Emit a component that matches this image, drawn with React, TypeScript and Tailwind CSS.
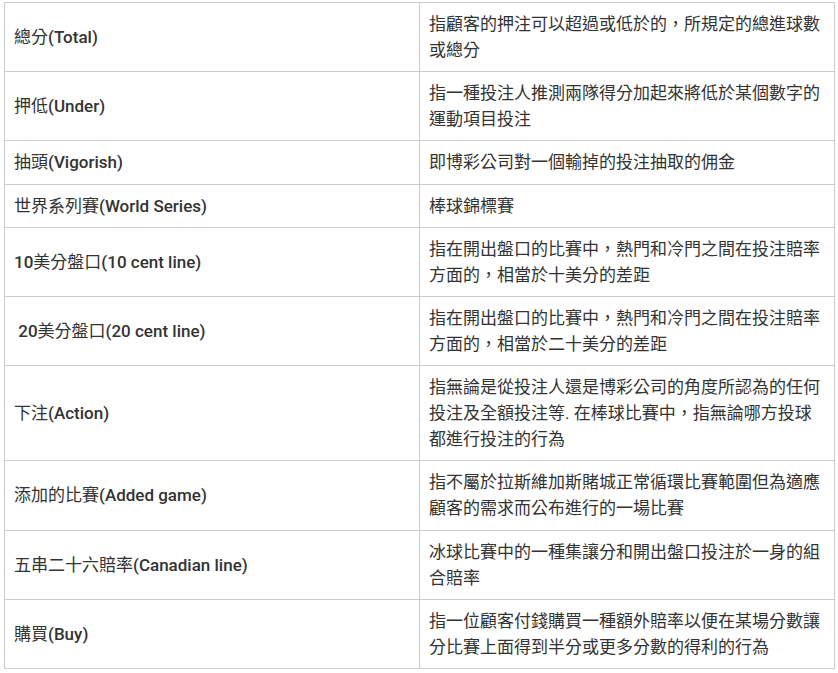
import React from "react";

type Term = { zh: string; en: string; desc: string; lead?: boolean };

const terms: Term[] = [
  { zh: "總分", en: "(Total)", desc: "指顧客的押注可以超過或低於的，所規定的總進球數或總分" },
  { zh: "押低", en: "(Under)", desc: "指一種投注人推測兩隊得分加起來將低於某個數字的運動項目投注" },
  { zh: "抽頭", en: "(Vigorish)", desc: "即博彩公司對一個輸掉的投注抽取的佣金" },
  { zh: "世界系列賽", en: "(World Series)", desc: "棒球錦標賽" },
  { zh: "10美分盤口", en: "(10 cent line)", desc: "指在開出盤口的比賽中，熱門和冷門之間在投注賠率方面的，相當於十美分的差距" },
  { zh: "20美分盤口", en: "(20 cent line)", desc: "指在開出盤口的比賽中，熱門和冷門之間在投注賠率方面的，相當於二十美分的差距", lead: true },
  { zh: "下注", en: "(Action)", desc: "指無論是從投注人還是博彩公司的角度所認為的任何投注及全額投注等. 在棒球比賽中，指無論哪方投球都進行投注的行為" },
  { zh: "添加的比賽", en: "(Added game)", desc: "指不屬於拉斯維加斯賭城正常循環比賽範圍但為適應顧客的需求而公布進行的一場比賽" },
  { zh: "五串二十六賠率", en: "(Canadian line)", desc: "冰球比賽中的一種集讓分和開出盤口投注於一身的組合賠率" },
  { zh: "購買", en: "(Buy)", desc: "指一位顧客付錢購買一種額外賠率以便在某場分數讓分比賽上面得到半分或更多分數的得利的行為" },
];

// leading digits in the left column are medium weight like the latin part
const renderName = (t: Term) => {
  const m = t.zh.match(/^(\d+)(.*)$/);
  return (
    <>
      {t.lead && "\u00a0"}
      {m ? (
        <>
          <span className="font-medium">{m[1]}</span>
          {m[2]}
        </>
      ) : (
        t.zh
      )}
      <span className="font-medium">{t.en}</span>
    </>
  );
};

const App = () => {
  return (
    <div
      className="bg-white min-h-[673px] pl-[4px] pt-[2px] text-[#333] text-[17px] leading-[26px]"
      style={{ fontFamily: 'Roboto, "Noto Sans CJK TC", sans-serif' }}
    >
      <table className="w-[831px] border-collapse table-fixed">
        <tbody>
          {terms.map((t) => (
            <tr key={t.zh}>
              <td className="w-[415px] border border-[#cccccc] px-[9px] py-[8.1px] align-middle">
                {renderName(t)}
              </td>
              <td className="border border-[#cccccc] px-[9px] py-[8.1px] align-middle">
                {t.desc}
              </td>
            </tr>
          ))}
        </tbody>
      </table>
    </div>
  );
};

export default App;
